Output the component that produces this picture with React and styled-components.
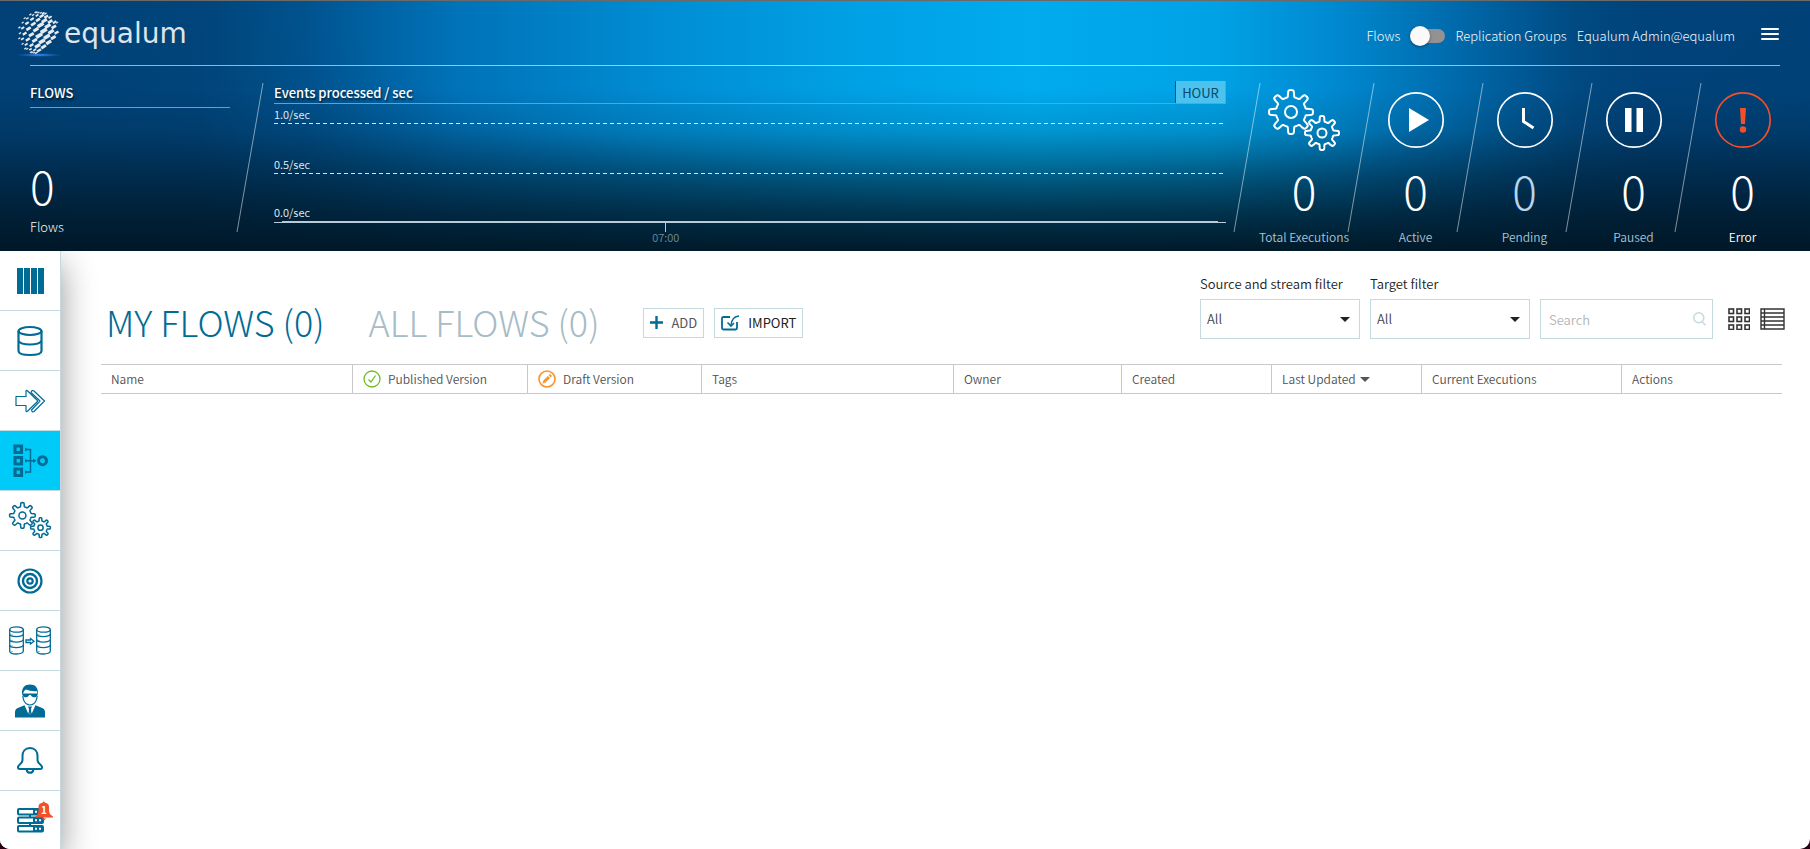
import React, { useState } from 'react';
import styled, { createGlobalStyle } from 'styled-components';

const GlobalStyle = createGlobalStyle`
  * {
    box-sizing: border-box;
  }
  body {
    margin: 0;
    background: #2a0014;
    color: #333;
    font-family: 'Noto Sans CJK SC', 'Liberation Sans', sans-serif;
    font-size: 13px;
    line-height: 20px;
  }
  button,
  input,
  select {
    font: inherit;
    color: inherit;
  }
`;

const Page = styled.div`
  display: flex;
  flex-direction: column;
  height: 100vh;
  overflow: hidden;
  background: #fff;
  border-radius: 0 0 10px 10px;
`;

/* ---------- header ---------- */

const Header = styled.header`
  flex: none;
  z-index: 1;
  color: #fff;
  border-top: 1px solid #6a6a6a;
  background: linear-gradient(
      to bottom,
      rgba(0, 22, 36, 0) 35%,
      rgba(0, 22, 36, 0.14) 52%,
      rgba(0, 22, 36, 0.5) 70%,
      rgba(0, 22, 36, 0.76) 85%,
      rgba(0, 22, 36, 0.96) 100%
    ),
    radial-gradient(
      ellipse 60% 110% at 55% 0,
      rgba(0, 60, 110, 0) 60%,
      rgba(0, 60, 110, 0.4) 100%
    ),
    linear-gradient(
      to right,
      #00437a 0,
      #00467d 11%,
      #005490 17%,
      #0072b8 25%,
      #008cd2 36%,
      #00a0e5 47%,
      #00abee 57%,
      #00a2e6 67%,
      #0088cf 74%,
      #006cae 80%,
      #004a82 87%,
      #00437a 91%
    );
`;

const TopBar = styled.div`
  display: flex;
  align-items: center;
  height: 64px;
  padding: 6px 30px 0 17px;
`;

const Logo = styled.a`
  display: flex;
  align-items: center;
  gap: 2px;
  margin-right: auto;
  padding-bottom: 4px;
  color: #dfe4ea;
  font-family: 'DejaVu Sans', sans-serif;
  font-size: 28px;
  line-height: 32px;
  text-decoration: none;
`;

const ModeSwitch = styled.label`
  display: flex;
  align-items: center;
  gap: 10px;
  color: #f2f8fc;
  font-weight: 300;
`;

const Switch = styled.input`
  appearance: none;
  display: flex;
  align-items: center;
  width: 35px;
  height: 14px;
  margin: 0;
  border-radius: 7px;
  background: #929292;
  cursor: pointer;

  &::before {
    content: '';
    width: 20px;
    height: 20px;
    margin-left: ${(props) => (props.checked ? '15px' : '0')};
    flex: none;
    border-radius: 50%;
    background: #fafafa;
    box-shadow: 0 1px 3px rgba(0, 0, 0, 0.4);
  }
`;

const UserName = styled.span`
  margin-left: 10px;
  color: #f2f8fc;
  font-weight: 300;
`;

const MenuButton = styled.button`
  display: flex;
  flex-direction: column;
  gap: 3px;
  width: 18px;
  margin: 0 1px 4px 26px;
  padding: 0;
  border: 0;
  background: none;
  cursor: pointer;
`;

const MenuBar = styled.span`
  height: 2px;
  border-radius: 1px;
  background: #fff;
`;

const Divider = styled.hr`
  height: 1px;
  margin: 0 30px;
  border: 0;
  background: rgba(255, 255, 255, 0.6);
`;

const Summary = styled.div`
  display: flex;
  height: 185px;
  padding: 0 27px 0 30px;
`;

const FlowsPanel = styled.section`
  display: flex;
  flex-direction: column;
  width: 200px;
  margin-right: 6px;
  padding-top: 15px;
`;

const PanelTitle = styled.h2`
  margin: 0;
  font-size: 13px;
  font-weight: 500;
  line-height: 24px;
  text-shadow: 1px 2px 2px rgba(0, 0, 0, 0.6);
`;

const FlowsTitle = styled(PanelTitle)`
  padding-bottom: 2px;
  border-bottom: 1px solid #00cbf8;
`;

const BigNumber = styled.div`
  color: ${(props) => props.$color || '#fff'};
  font-size: 46px;
  font-weight: 200;
  line-height: 50px;
`;

const FlowsCount = styled(BigNumber)`
  margin-top: 52px;
`;

const FlowsCaption = styled.div`
  margin-top: 7px;
  color: #f2f8fc;
  font-weight: 300;
`;

const SlashSvg = styled.svg`
  flex: none;
  width: 28px;
  height: 149px;
  margin-top: 17px;
`;

const Chart = styled.section`
  flex: 1;
  min-width: 0;
  margin: 0 7px 0 10px;
  padding-top: 15px;
`;

const ChartHead = styled.div`
  display: flex;
  justify-content: space-between;
  height: 23px;
  border-bottom: 1px solid #00cbf8;
`;

const RangeButton = styled.button`
  width: 51px;
  padding: 2px 0 0;
  border: 0;
  border-left: 1px solid #0a5c86;
  border-right: 1px solid #00cbf8;
  background: #4cc3ef;
  color: #07486b;
  line-height: 20px;
  cursor: pointer;
`;

const GridRow = styled.div`
  display: flex;
  flex-direction: column;
  justify-content: flex-end;
  height: ${(props) => props.$height}px;
  color: #e6f1f8;
  font-size: 11px;
  font-weight: 350;
  line-height: 18px;
`;

const DashedLine = styled.div`
  height: 1px;
  background: repeating-linear-gradient(
    to right,
    rgba(255, 255, 255, 0.85) 0 4px,
    transparent 4px 7px
  );
`;

const AxisLine = styled.div`
  height: 2px;
  border-bottom: 1px solid #b9cbd8;

  &::before {
    content: '';
    display: block;
    height: 1px;
    margin: 0 8px;
    background: #b9cbd8;
  }
`;

const Tick = styled.div`
  display: flex;
  flex-direction: column;
  align-items: center;
  width: 22px;
  margin-left: 40%;
  color: #6f8b99;
  font-size: 11px;
  font-weight: 350;
  line-height: 10px;

  &::before {
    content: '';
    width: 1px;
    height: 9px;
    background: #b9cbd8;
  }
`;

const StatBody = styled.div`
  display: flex;
  flex-direction: column;
  align-items: center;
  width: ${(props) => (props.$wide ? 86 : 81)}px;
  padding-top: 25px;
  white-space: nowrap;
`;

const StatIcon = styled.div`
  display: flex;
  align-items: center;
  height: 58px;
`;

const StatCount = styled(BigNumber)`
  margin-top: 16px;
`;

const StatLabel = styled.div`
  margin-top: 12px;
  color: ${(props) => props.$color};
  font-size: 12px;
  font-weight: 350;
`;

/* ---------- sidebar ---------- */

const Body = styled.div`
  display: flex;
  flex: 1;
  min-height: 0;
`;

const Sidebar = styled.nav`
  flex: none;
  width: 61px;
  border-right: 1px solid #c4dadf;
  background: #fff;
  box-shadow: 0 12px 34px rgba(0, 0, 0, 0.42);
`;

const NavItem = styled.a`
  display: flex;
  align-items: center;
  justify-content: center;
  height: 60px;
  border-bottom: 1px solid #c4dadf;
  background: ${(props) => (props.$active ? '#00cbf8' : '#fff')};
  color: #006c96;

  svg {
    display: block;
    overflow: visible;
  }
`;

/* ---------- main ---------- */

const Main = styled.main`
  flex: 1;
  min-width: 0;
  padding: 23px 25px 0 40px;
`;

const Toolbar = styled.div`
  display: flex;
  align-items: flex-end;
`;

const TabsRow = styled.div`
  display: flex;
  align-items: center;
  gap: 44px;
  margin-right: auto;
`;

const Tabs = styled.div`
  display: flex;
  gap: 44px;
  padding: 0 0 3px 5px;
`;

const TabButton = styled.button`
  padding: 0;
  border: 0;
  background: none;
  color: ${(props) => (props.$active ? '#006c96' : '#a6bcc6')};
  font-size: 36px;
  font-weight: 200;
  line-height: 30px;
  white-space: nowrap;
  cursor: pointer;
`;

const Actions = styled.div`
  display: flex;
  gap: 10px;
`;

const ActionButton = styled.button`
  display: flex;
  align-items: center;
  gap: 8px;
  height: 30px;
  padding: 0 6px;
  border: 1px solid #c4dadf;
  background: #fff;
  color: ${(props) => props.$color};
  cursor: pointer;
`;

const Filters = styled.div`
  display: flex;
  align-items: flex-end;
  gap: 10px;
`;

const Field = styled.label`
  display: flex;
  flex-direction: column;
  width: ${(props) => props.$width}px;
  color: #222;
  font-weight: 350;
`;

const Control = styled.span`
  display: flex;
  align-items: center;
  height: 40px;
  margin-top: 5px;
  padding-right: ${(props) => (props.$search ? 6 : 9)}px;
  border: 1px solid #c4dadf;
  background: #fff;
`;

const Select = styled.select`
  flex: 1;
  min-width: 0;
  height: 38px;
  margin-right: -20px;
  padding: 0 20px 0 6px;
  appearance: none;
  border: 0;
  outline: 0;
  background: transparent;
  color: #444;
`;

const Caret = styled.i`
  flex: none;
  border: solid transparent;
  border-width: 5px 5px 0;
  border-top-color: ${(props) => props.$color};
  pointer-events: none;
`;

const SearchInput = styled.input`
  flex: 1;
  min-width: 0;
  height: 38px;
  padding: 0 8px;
  border: 0;
  outline: 0;
  background: transparent;

  &::placeholder {
    color: #b5b5b5;
    opacity: 1;
  }
`;

const ViewButtons = styled.div`
  display: flex;
  align-items: center;
  gap: 10px;
  height: 40px;
  margin-left: 5px;
`;

const IconButton = styled.button`
  display: flex;
  padding: 0;
  border: 0;
  background: none;
  cursor: pointer;
`;

const TableWrap = styled.div`
  margin: 25px 3px 0 0;
`;

const Table = styled.table`
  width: 100%;
  table-layout: fixed;
  border-spacing: 0;
`;

const HeadCell = styled.th`
  width: ${(props) => props.$width}px;
  height: 30px;
  padding: 0 10px;
  border-top: 1px solid #c9c9c9;
  border-bottom: 1px solid #c9c9c9;
  color: #505050;
  font-size: 12px;
  font-weight: 350;
  line-height: 18px;
  text-align: left;
  white-space: nowrap;

  & + & {
    border-left: 1px solid #c9c9c9;
  }
`;

const HeadLabel = styled.span`
  display: flex;
  align-items: center;
  gap: ${(props) => props.$gap || 0}px;
`;

/* ---------- drawings ---------- */

const gearPath = (cx, cy, outer, inner, teeth = 8) => {
  const points = [];
  const steps = teeth * 24;
  for (let i = 0; i < steps; i += 1) {
    const angle = (i / steps) * Math.PI * 2;
    const wave = Math.cos(angle * teeth);
    const lift = 1 / (1 + Math.exp(-7 * (wave - 0.25)));
    const r = inner + (outer - inner) * lift;
    points.push(
      `${(cx + r * Math.cos(angle)).toFixed(2)} ${(cy + r * Math.sin(angle)).toFixed(2)}`
    );
  }
  return `M${points.join('L')}Z`;
};

const Gears = ({ width, stroke }) => (
  <svg
    width={width}
    viewBox="0 0 72 62"
    fill="none"
    stroke="currentColor"
    strokeWidth={stroke}
    strokeLinejoin="round"
  >
    <path d={gearPath(23, 23, 22, 15)} />
    <circle cx="23" cy="23" r="6" />
    <path d={gearPath(54, 44, 17, 11.5)} />
    <circle cx="54" cy="44" r="4.5" />
  </svg>
);

// one entry per tile row: vertical position and how far right the tiles reach
const globeRows = [
  { lat: -72, end: 40 },
  { lat: -54, end: 58 },
  { lat: -37, end: 78 },
  { lat: -22, end: 62 },
  { lat: -7, end: 66 },
  { lat: 8, end: 60 },
  { lat: 23, end: 44 },
  { lat: 39, end: 30 },
  { lat: 56, end: 20 },
  { lat: 74, end: 10 },
];

const globeTiles = () => {
  const tiles = [];
  globeRows.forEach(({ lat, end }, row) => {
    const phi = (lat * Math.PI) / 180;
    for (let deg = -76 + (row % 2) * 11; deg <= end; deg += 22) {
      const lon = (deg * Math.PI) / 180;
      const x = 21 * Math.cos(phi) * Math.sin(lon);
      const size = Math.max(0.4, Math.cos(phi) * Math.cos(lon) + (x > 0 ? 0.2 : 0));
      tiles.push({ x: 22 + x, y: 22 + 21 * Math.sin(phi), size });
    }
  });
  return tiles;
};

const Globe = () => (
  <svg width="45" height="46" viewBox="0 0 45 46" overflow="visible">
    <defs>
      <radialGradient id="glow">
        <stop offset="0" stopColor="#3f9bff" />
        <stop offset="1" stopColor="#1f66d8" stopOpacity="0" />
      </radialGradient>
    </defs>
    <ellipse cx="22" cy="44" rx="24" ry="2" fill="url(#glow)" />
    <g transform="rotate(8 22 22)" stroke="#e6e9ed">
      {globeTiles().map(({ x, y, size }, index) => (
        <line
          key={index}
          x1={x - 2.2 * size}
          y1={y + 1.6 * size}
          x2={x + 2.4 * size}
          y2={y - 2.2 * size}
          strokeWidth={3.2 * size}
        />
      ))}
    </g>
  </svg>
);

const Slash = () => (
  <SlashSvg viewBox="0 0 28 149">
    <path d="M27 0L1 149" stroke="#fff" strokeOpacity="0.5" />
  </SlashSvg>
);

const Ring = ({ color = '#fff', children }) => (
  <svg width="58" height="58" viewBox="0 0 58 58" fill={color}>
    <circle cx="29" cy="29" r="27.2" fill="none" stroke={color} strokeWidth="1.7" />
    {children}
  </svg>
);

const PlayIcon = () => (
  <Ring>
    <path d="M22 17L42 29L22 41Z" />
  </Ring>
);

const ClockIcon = () => (
  <Ring>
    <path d="M27.5 17V30.5L37.5 37" fill="none" stroke="#fff" strokeWidth="3" />
  </Ring>
);

const PauseIcon = () => (
  <Ring>
    <path d="M20 17h6.5v24H20zM31.5 17H38v24h-6.5z" />
  </Ring>
);

const ErrorIcon = () => (
  <Ring color="#f2502a">
    <path d="M26 17h6l-1 16h-4z" />
    <circle cx="29" cy="38.5" r="3.2" />
  </Ring>
);

const ColumnsIcon = () => (
  <svg width="27" height="26" fill="currentColor">
    <path d="M0 0h6v26H0zM7 0h6v26H7zM14 0h6v26h-6zM21 0h6v26h-6z" />
  </svg>
);

const DatabaseIcon = () => (
  <svg width="26" height="30" viewBox="0 0 26 30" fill="none" stroke="currentColor" strokeWidth="2.2">
    <ellipse cx="13" cy="5" rx="11.5" ry="4" />
    <path d="M1.5 5V25C1.5 27.5 6 29 13 29S24.5 27.5 24.5 25V5" />
    <path d="M1.5 15C3 17.5 8 18.500 13 18.5S23 17.5 24.5 15" />
  </svg>
);

const ArrowsIcon = () => (
  <svg width="31" height="24" viewBox="0 0 31 24" fill="none" stroke="currentColor" strokeWidth="1.2" strokeLinejoin="round">
    <path d="M1 7.5H11V2.5Q11 .5 12.7 2L22 11Q23 12 22 13L12.7 22Q11 23.5 11 21.5V16.5H1Z" />
    <path d="M16 3.500Q17 .5 19 2L29.5 12L19 22.5Q17 23.5 16.5 21L25 12Z" />
  </svg>
);

const FlowIcon = () => (
  <svg width="35" height="34" viewBox="0 0 35 34" fill="none" stroke="currentColor">
    <path d="M2 2h6.5v6.5H2zM2 13.500h6.500v6.500H2zM2 25h6.500v6.500H2z" strokeWidth="3.2" />
    <path d="M12.5 5.500H17.500V28H12.500M12.500 16.700H22" strokeWidth="1.5" />
    <path d="M12 3.500l3 2-3 2zM12 14.700l3 2-3 2zM12 26l3 2-3 2zM20 14.500l3.500 2.200L20 19z" fill="currentColor" stroke="none" />
    <circle cx="29.500" cy="16.700" r="4" strokeWidth="3" />
  </svg>
);

const TargetIcon = () => (
  <svg width="26" height="26" viewBox="0 0 26 26" fill="none" stroke="currentColor" strokeWidth="2.2">
    <circle cx="13" cy="13" r="11.5" />
    <circle cx="13" cy="13" r="7" strokeWidth="2.400" />
    <circle cx="13" cy="13" r="2.700" />
  </svg>
);

const DiskStack = ({ x }) => (
  <g transform={`translate(${x} 0)`}>
    <ellipse cx="7.5" cy="3.5" rx="6.8" ry="2.7" />
    <path d="M.7 3.500V25C.7 29 14.3 29 14.3 25V3.5" />
    <path d="M.7 8C.7 11.5 14.3 11.5 14.3 8M.7 13.5C.7 17 14.3 17 14.3 13.5M.7 19C.7 22.5 14.3 22.5 14.3 19" />
    <path d="M3 8.500v.8M3 14v.8M3 19.500v.8M3 25v.8" strokeWidth="1" />
  </g>
);

const ReplicationIcon = () => (
  <svg width="42" height="29" viewBox="0 0 42 29" fill="none" stroke="currentColor" strokeWidth="1.3">
    <DiskStack x={0} />
    <path d="M17 14H21.5V12.5L25 15.2L21.5 18V16.5H17Z" />
    <DiskStack x={27} />
  </svg>
);

const AgentIcon = () => (
  <svg width="30" height="34" viewBox="0 0 30 34" fill="currentColor">
    <path d="M7.3 11C6 3.5 10 .5 15 .5S24 3.5 22.7 11L21.7 7Q17 8 11 5.5Q9 6 8.3 9Z" />
    <path d="M7.3 9.5H22.7V10.500Q22 13.5 18.5 13.3Q16.5 13 15.7 11H14.3Q13.5 13 11.5 13.3Q8 13.5 7.3 10.5Z" />
    <path d="M7.8 12Q8.5 17.5 11 19.5Q15 22.5 19 19.5Q21.5 17.5 22.2 12" fill="none" stroke="currentColor" strokeWidth="1.2" />
    <path d="M0 33.5V28Q0 24.5 4 23.5L9.5 21.2L13 29L14 25L13 22.5H17L16 25L17 29L20.5 21.2L26 23.5Q30 24.5 30 28V33.5Z" />
    <path d="M11 22.500L14.500 31L13.500 25.500ZM19 22.500L15.500 31L16.500 25.500Z" fill="#fff" />
  </svg>
);

const BellIcon = () => (
  <svg width="26" height="27" viewBox="0 0 26 27" fill="none" stroke="currentColor" strokeWidth="2" strokeLinejoin="round">
    <path d="M13 1C8 1 5.5 4.5 5.5 9V13C5.5 17 1 17.5 1 20.5C1 21.5 2 22 3 22H23C24 22 25 21.5 25 20.5C25 17.5 20.5 17 20.5 13V9C20.5 4.5 18 1 13 1Z" />
    <path d="M9.500 22.5Q10 25.8 13 25.8T16.5 22.5" />
  </svg>
);

const ServersIcon = () => (
  <svg width="27" height="25" viewBox="0 0 27 25" fill="none" stroke="currentColor" strokeWidth="2">
    <path d="M13 6v14" />
    {[1, 9.5, 18].map((y) => (
      <g key={y}>
        <rect x="1" y={y} width="25" height="5.5" rx="1" fill="#fff" />
        <rect x="16" y={y} width="10" height="5.5" fill="currentColor" stroke="none" />
        <path d={`M18 ${y + 2.7}h2M22 ${y + 2.7}h2`} stroke="#fff" />
      </g>
    ))}
    <path
      d="M18.500 8.500Q21.500 6.500 21.500 2V-1Q21.500-5 25.500-5.300Q26.500-7.500 28-5.300Q32-5 32-1V2Q32 6.500 36 8.500V9.500H18.500ZM24.500 10.500h5l-2.500 2z"
      fill="#f2502a"
      stroke="none"
    />
    <text x="27" y="6" fill="#fff" stroke="none" fontSize="10" fontWeight="700" textAnchor="middle">
      1
    </text>
  </svg>
);

const PlusIcon = () => (
  <svg width="13" height="13" viewBox="0 0 13 13">
    <path d="M6.500 0v13M0 6.500h13" stroke="#006c96" strokeWidth="2.400" />
  </svg>
);

const ImportIcon = () => (
  <svg width="19" height="16" viewBox="0 0 19 16" fill="none" stroke="#006c96" strokeWidth="1.800">
    <path d="M9 2H2.500Q1 2 1 3.500V13Q1 14.500 2.500 14.500H14.500Q16 14.500 16 13V7" />
    <path d="M18 1Q11 1.500 10 10" strokeWidth="1.400" />
    <path d="M6.500 7.500L10 11L13 8" strokeWidth="1.600" />
  </svg>
);

const SearchIcon = () => (
  <svg width="13" height="14" viewBox="0 0 13 14" fill="none" stroke="#c4dadf" strokeWidth="1.500">
    <circle cx="5.800" cy="5.800" r="5" />
    <path d="M9 9.500L12.500 13.300" />
  </svg>
);

const GridIcon = () => (
  <svg width="22" height="22" viewBox="0 0 22 22" fill="#fff" stroke="#333" strokeWidth="1.600">
    {[0, 1, 2].map((row) =>
      [0, 1, 2].map((col) => (
        <rect key={`${row}${col}`} x={1 + col * 8} y={1 + row * 8} width="4.500" height="4.500" />
      ))
    )}
  </svg>
);

const ListIcon = () => (
  <svg width="25" height="22" viewBox="0 0 25 22" fill="none" stroke="#333" strokeWidth="1.400">
    <path d="M1 1h23v20H1zM4.500 1v20M1 5h23M1 9h23M1 13h23M1 17h23" />
  </svg>
);

const PublishedIcon = () => (
  <svg width="18" height="18" viewBox="0 0 18 18" fill="none" stroke="#6abf1e" strokeWidth="1.300">
    <circle cx="9" cy="9" r="8" />
    <path d="M5.500 9.500L8 12L12.500 5.500" />
  </svg>
);

const DraftIcon = () => (
  <svg width="18" height="18" viewBox="0 0 18 18" fill="none" stroke="#f8952a" strokeWidth="1.600">
    <circle cx="9" cy="9" r="8" />
    <path d="M6 12L11 7M11.700 6.300L13 5" strokeWidth="3" />
    <path d="M4.500 13.500L5 11L7 13Z" fill="#f8952a" stroke="none" />
  </svg>
);

/* ---------- data ---------- */

const stats = [
  { label: 'Total Executions', icon: <Gears width={72} stroke={2} />, labelColor: '#a9c5d4', wide: true },
  { label: 'Active', icon: <PlayIcon />, labelColor: '#a9c5d4' },
  { label: 'Pending', icon: <ClockIcon />, labelColor: '#a9c5d4', color: '#b5d6ea' },
  { label: 'Paused', icon: <PauseIcon />, labelColor: '#a9c5d4' },
  { label: 'Error', icon: <ErrorIcon />, labelColor: '#fff' },
];

const navItems = [
  { name: 'Dashboard', icon: <ColumnsIcon /> },
  { name: 'Sources', icon: <DatabaseIcon /> },
  { name: 'Streams', icon: <ArrowsIcon /> },
  { name: 'Flows', icon: <FlowIcon />, active: true },
  { name: 'Executions', icon: <Gears width={42} stroke={2.6} /> },
  { name: 'Targets', icon: <TargetIcon /> },
  { name: 'Replication', icon: <ReplicationIcon /> },
  { name: 'Agents', icon: <AgentIcon /> },
  { name: 'Alerts', icon: <BellIcon /> },
  { name: 'System', icon: <ServersIcon /> },
];

const columns = [
  { label: 'Name', width: 251 },
  { label: 'Published Version', width: 175, icon: <PublishedIcon />, gap: 7 },
  { label: 'Draft Version', width: 174, icon: <DraftIcon />, gap: 7 },
  { label: 'Tags', width: 252 },
  { label: 'Owner', width: 168 },
  { label: 'Created', width: 150 },
  { label: 'Last Updated', width: 150, sorted: true, gap: 4 },
  { label: 'Current Executions', width: 200 },
  { label: 'Actions', width: 161 },
];

const tabs = ['MY FLOWS (0)', 'ALL FLOWS (0)'];

/* ---------- sections ---------- */

const FilterSelect = ({ label }) => (
  <Field $width={160}>
    {label}
    <Control>
      <Select defaultValue="All">
        <option>All</option>
      </Select>
      <Caret $color="#222" />
    </Control>
  </Field>
);

const PageHeader = () => {
  const [replication, setReplication] = useState(false);

  return (
    <Header>
      <TopBar>
        <Logo href="#">
          <Globe />
          equalum
        </Logo>
        <ModeSwitch>
          Flows
          <Switch
            type="checkbox"
            role="switch"
            checked={replication}
            onChange={() => setReplication(!replication)}
          />
          Replication Groups
        </ModeSwitch>
        <UserName>Equalum Admin@equalum</UserName>
        <MenuButton aria-label="Menu">
          <MenuBar />
          <MenuBar />
          <MenuBar />
        </MenuButton>
      </TopBar>
      <Divider />
      <Summary>
        <FlowsPanel>
          <FlowsTitle>FLOWS</FlowsTitle>
          <FlowsCount>0</FlowsCount>
          <FlowsCaption>Flows</FlowsCaption>
        </FlowsPanel>
        <Slash />
        <Chart>
          <ChartHead>
            <PanelTitle>Events processed / sec</PanelTitle>
            <RangeButton>HOUR</RangeButton>
          </ChartHead>
          <GridRow $height={20}>
            1.0/sec
            <DashedLine />
          </GridRow>
          <GridRow $height={50}>
            0.5/sec
            <DashedLine />
          </GridRow>
          <GridRow $height={49}>
            0.0/sec
            <AxisLine />
          </GridRow>
          <Tick>07:00</Tick>
        </Chart>
        {stats.map((stat) => (
          <React.Fragment key={stat.label}>
            <Slash />
            <StatBody $wide={stat.wide}>
              <StatIcon>{stat.icon}</StatIcon>
              <StatCount $color={stat.color}>0</StatCount>
              <StatLabel $color={stat.labelColor}>{stat.label}</StatLabel>
            </StatBody>
          </React.Fragment>
        ))}
      </Summary>
    </Header>
  );
};

const App = () => {
  const [currentTab, setCurrentTab] = useState(0);

  return (
    <Page>
      <GlobalStyle />
      <PageHeader />
      <Body>
        <Sidebar>
          {navItems.map((item) => (
            <NavItem key={item.name} href="#" aria-label={item.name} $active={item.active}>
              {item.icon}
            </NavItem>
          ))}
        </Sidebar>
        <Main>
          <Toolbar>
            <TabsRow>
              <Tabs>
                {tabs.map((tab, index) => (
                  <TabButton
                    key={tab}
                    $active={index === currentTab}
                    onClick={() => setCurrentTab(index)}
                  >
                    {tab}
                  </TabButton>
                ))}
              </Tabs>
              <Actions>
                <ActionButton $color="#555">
                  <PlusIcon />
                  ADD
                </ActionButton>
                <ActionButton $color="#222">
                  <ImportIcon />
                  IMPORT
                </ActionButton>
              </Actions>
            </TabsRow>
            <Filters>
              <FilterSelect label="Source and stream filter" />
              <FilterSelect label="Target filter" />
              <Field $width={173}>
                <Control $search>
                  <SearchInput type="search" placeholder="Search" aria-label="Search" />
                  <SearchIcon />
                </Control>
              </Field>
              <ViewButtons>
                <IconButton aria-label="Grid view">
                  <GridIcon />
                </IconButton>
                <IconButton aria-label="List view">
                  <ListIcon />
                </IconButton>
              </ViewButtons>
            </Filters>
          </Toolbar>
          <TableWrap>
            <Table>
              <thead>
                <tr>
                  {columns.map((column) => (
                    <HeadCell key={column.label} $width={column.width}>
                      <HeadLabel $gap={column.gap}>
                        {column.icon}
                        {column.label}
                        {column.sorted && <Caret $color="#555" />}
                      </HeadLabel>
                    </HeadCell>
                  ))}
                </tr>
              </thead>
            </Table>
          </TableWrap>
        </Main>
      </Body>
    </Page>
  );
};

export default App;
